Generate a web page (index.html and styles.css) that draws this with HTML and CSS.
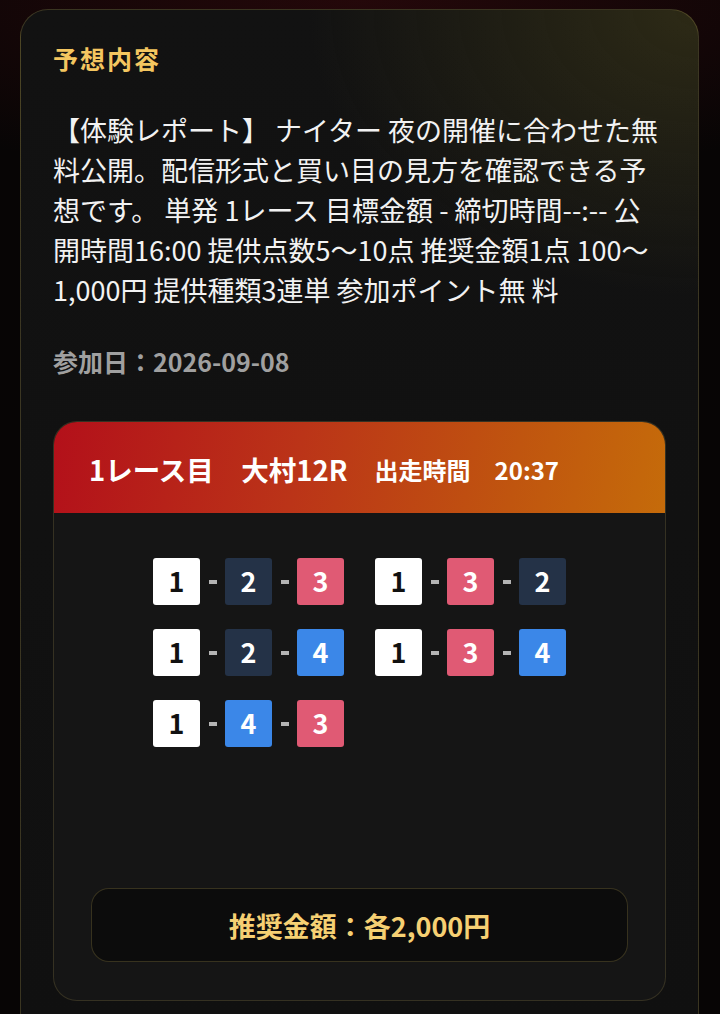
FILE: index.html
```html
<!DOCTYPE html>
<html lang="ja">
<head>
<meta charset="utf-8">
<title>予想内容</title>
<link rel="stylesheet" href="styles.css">
</head>
<body>
<div class="page">
  <section class="card">
    <h2 class="title">予想内容</h2>
    <p class="desc">【体験レポート】 ナイター 夜の開催に合わせた無料公開。配信形式と買い目の見方を確認できる予想です。 単発 1レース 目標金額 - 締切時間--:-- 公開時間16:00 提供点数5〜10点 推奨金額1点 100〜1,000円 提供種類3連単 参加ポイント無 料</p>
    <p class="joined">参加日：2026-09-08</p>

    <div class="race">
      <div class="race-head">
        <span class="race-name">1レース目　大村12R</span>
        <span class="race-time">出走時間　20:37</span>
      </div>
      <div class="race-body">
        <div class="bets">
          <div class="bet"><span class="num n1">1</span><span class="sep"></span><span class="num n2">2</span><span class="sep"></span><span class="num n3">3</span></div>
          <div class="bet"><span class="num n1">1</span><span class="sep"></span><span class="num n3">3</span><span class="sep"></span><span class="num n2">2</span></div>
          <div class="bet"><span class="num n1">1</span><span class="sep"></span><span class="num n2">2</span><span class="sep"></span><span class="num n4">4</span></div>
          <div class="bet"><span class="num n1">1</span><span class="sep"></span><span class="num n3">3</span><span class="sep"></span><span class="num n4">4</span></div>
          <div class="bet"><span class="num n1">1</span><span class="sep"></span><span class="num n4">4</span><span class="sep"></span><span class="num n3">3</span></div>
        </div>
        <div class="total">推奨金額：各2,000円</div>
      </div>
    </div>
  </section>
</div>
</body>
</html>
```

FILE: styles.css
```css
* { box-sizing: border-box; }

html, body {
  margin: 0;
  padding: 0;
}

body {
  width: 720px;
  height: 1014px;
  overflow: hidden;
  background:
    radial-gradient(ellipse 900px 260px at 50% 0%, rgba(60, 10, 14, 0.55), transparent 70%),
    #070505;
  font-family: "Noto Sans CJK JP", "Noto Sans", sans-serif;
  color: #f0f0f0;
}

.page {
  padding: 9px 21px 0 20px;
}

.card {
  border: 1px solid rgba(170, 150, 80, 0.28);
  border-radius: 28px;
  padding: 33px 32px 40px;
  background:
    radial-gradient(ellipse 520px 380px at 100% 0%, rgba(72, 66, 26, 0.5), transparent 75%),
    linear-gradient(180deg, #121212 0%, #101010 100%);
}

.title {
  margin: 0;
  font-size: 25px;
  line-height: 30px;
  font-weight: 700;
  letter-spacing: 2px;
  color: #f4c660;
}

.desc {
  margin: 37px 0 0;
  font-size: 27px;
  line-height: 40px;
  font-weight: 400;
  color: #f2f2f2;
}

.joined {
  margin: 35px 0 0;
  font-size: 25px;
  line-height: 32px;
  font-weight: 700;
  color: #a0a0a0;
}

.race {
  margin-top: 44px;
  border: 1px solid rgba(170, 150, 80, 0.22);
  border-radius: 24px;
  overflow: hidden;
  background: #151515;
}

.race-head {
  height: 91px;
  display: flex;
  align-items: center;
  padding-left: 35px;
  padding-top: 3px;
  background: linear-gradient(100deg, #b3101a 0%, #bb3418 40%, #c0550f 75%, #c56b0a 100%);
  color: #ffffff;
  font-weight: 700;
}

.race-name {
  font-size: 27.5px;
}

.race-time {
  margin-left: 27px;
  font-size: 24px;
}

.race-body {
  padding: 45px 37px 38px;
}

.bets {
  display: grid;
  grid-template-columns: repeat(2, max-content);
  justify-content: center;
  column-gap: 31px;
  row-gap: 24px;
  margin-bottom: 141px;
}

.bet {
  display: flex;
  align-items: center;
}

.num {
  width: 47px;
  height: 47px;
  border-radius: 3px;
  display: flex;
  align-items: center;
  justify-content: center;
  font-size: 27px;
  font-weight: 700;
  color: #ffffff;
  padding-bottom: 2px;
}

.n1 { background: #ffffff; color: #111111; }
.n2 { background: #243247; }
.n3 { background: #e05a74; }
.n4 { background: #3b87e8; }

.sep {
  width: 25px;
  display: flex;
  justify-content: center;
}

.sep::before {
  content: "";
  width: 8px;
  height: 4px;
  background: #b4b4b4;
}

.total {
  height: 74px;
  border: 1px solid rgba(170, 150, 80, 0.28);
  border-radius: 18px;
  background: #0c0c0c;
  display: flex;
  align-items: center;
  justify-content: center;
  font-size: 27px;
  font-weight: 700;
  color: #f6d073;
}
```
